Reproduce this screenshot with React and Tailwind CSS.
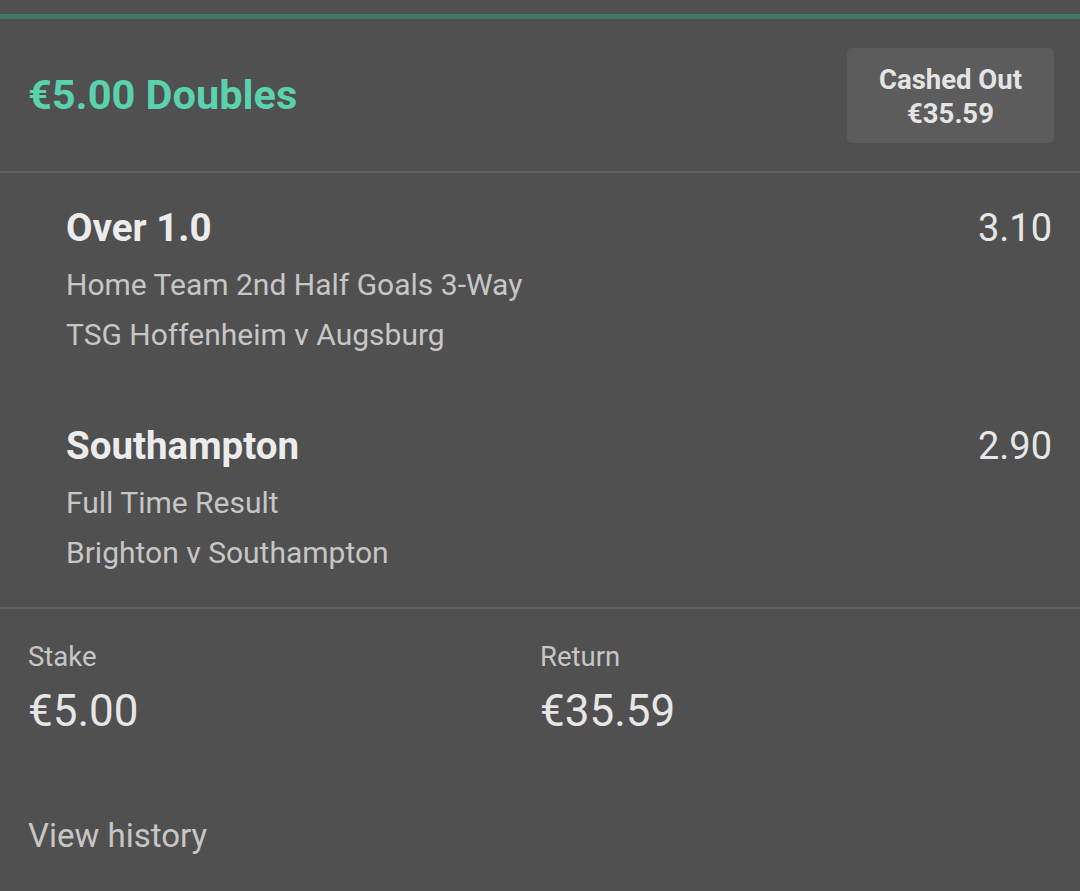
const selections = [
  {
    name: 'Over 1.0',
    odds: '3.10',
    market: 'Home Team 2nd Half Goals 3-Way',
    event: 'TSG Hoffenheim v Augsburg',
  },
  {
    name: 'Southampton',
    odds: '2.90',
    market: 'Full Time Result',
    event: 'Brighton v Southampton',
  },
];

const Selection = ({ sel, className }) => (
  <div className={`flex justify-between pl-[66px] pr-[28px] ${className}`}>
    <div className="flex flex-col">
      <div className="text-[38.5px] leading-[48px] font-bold text-[#ececec]">{sel.name}</div>
      <div className="mt-[8px] text-[30px] leading-[49.5px] text-[#c6c6c6]">
        <div>{sel.market}</div>
        <div>{sel.event}</div>
      </div>
    </div>
    <div className="text-[38px] leading-[48px] text-[#e6e6e6]">{sel.odds}</div>
  </div>
);

export default function App() {
  return (
    <div
      className="w-[1080px] h-[891px] bg-[#505050] overflow-hidden"
      style={{ fontFamily: 'Roboto, "Noto Sans", sans-serif' }}
    >
      <div className="pt-[14px]">
        <div className="h-[5px] bg-[#3e7a67]"></div>
      </div>

      <div className="h-[152px] flex items-center justify-between pl-[28px] pr-[26px]">
        <div className="text-[41.5px] font-bold text-[#5ad2ad]">€5.00 Doubles</div>
        <div className="w-[207px] h-[95px] pt-[4px] rounded-[5px] bg-[#5c5c5c] flex flex-col items-center justify-center text-[27.5px] leading-[34px] font-bold text-[#e4e4e4]">
          <div>Cashed Out</div>
          <div>€35.59</div>
        </div>
      </div>

      <div className="h-[2px] bg-[#5f5f5f]"></div>

      <div className="pt-[31px] pb-[30px]">
        <Selection sel={selections[0]} />
        <Selection sel={selections[1]} className="mt-[63px]" />
      </div>

      <div className="h-[2px] bg-[#5f5f5f]"></div>

      <div className="px-[28px] pt-[30px]">
        <div className="grid grid-cols-2">
          <div>
            <div className="text-[27.5px] leading-[36px] text-[#c6c6c6]">Stake</div>
            <div className="mt-2 text-[44px] leading-[56px] text-[#e6e6e6]">€5.00</div>
          </div>
          <div>
            <div className="text-[27.5px] leading-[36px] text-[#c6c6c6]">Return</div>
            <div className="mt-2 text-[44px] leading-[56px] text-[#e6e6e6]">€35.59</div>
          </div>
        </div>
        <div className="mt-[75px] text-[33px] leading-[44px] text-[#c6c6c6]">View history</div>
      </div>
    </div>
  );
}
